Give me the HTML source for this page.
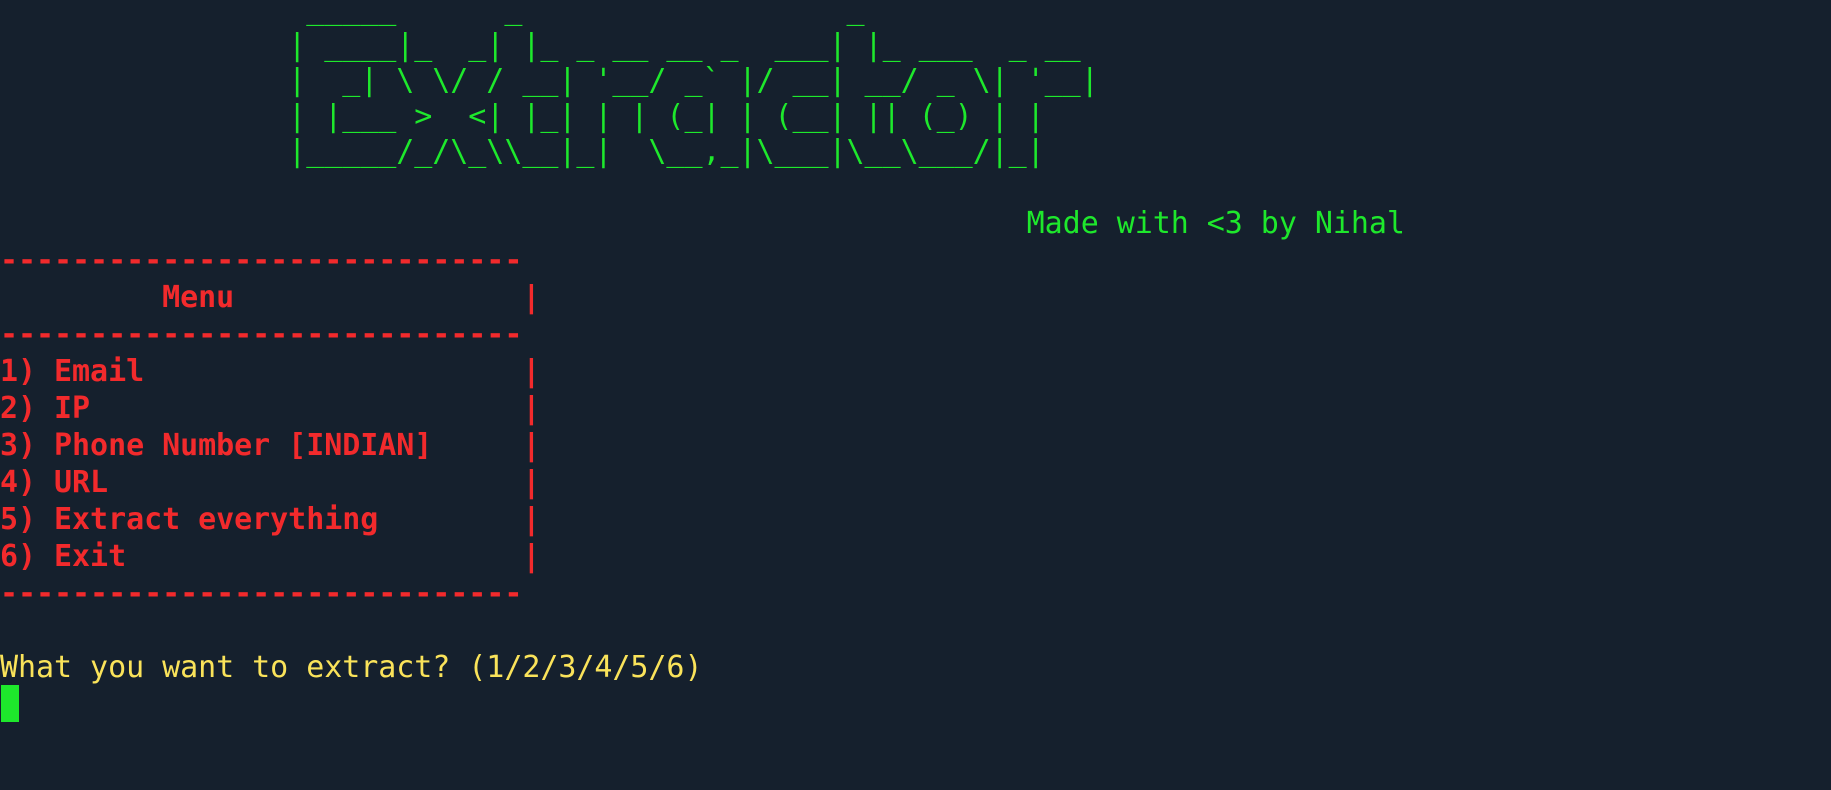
<!DOCTYPE html>
<html><head><meta charset="utf-8"><style>
html,body{margin:0;padding:0;background:#15202d;width:1831px;height:790px;overflow:hidden}
pre{position:absolute;left:0;margin:0;font-family:"DejaVu Sans Mono","Liberation Mono",monospace;font-size:30px;letter-spacing:-0.05px;white-space:pre}
.g{color:#1ee82c}.r{color:#f22a2c;font-weight:bold}.y{color:#fae35a}
#art{top:-8px;line-height:35.5px}
#made{top:206px;line-height:36px}
#menu{top:242px;line-height:37px}
#prompt{top:650px;line-height:36px}
#cur{position:absolute;left:1px;top:685px;width:18px;height:37px;background:#1ee82c}
</style></head><body>
<pre id="art" class="g">                 _____      _                  _             
                | ____|_  _| |_ _ __ __ _  ___| |_ ___  _ __ 
                |  _| \ \/ / __| '__/ _` |/ __| __/ _ \| '__|
                | |___ >  <| |_| | | (_| | (__| || (_) | |   
                |_____/_/\_\\__|_|  \__,_|\___|\__\___/|_|   </pre>
<pre id="made" class="g">                                                         Made with &lt;3 by Nihal</pre>
<pre id="menu" class="r">-----------------------------
         Menu                |
-----------------------------
1) Email                     |
2) IP                        |
3) Phone Number [INDIAN]     |
4) URL                       |
5) Extract everything        |
6) Exit                      |
-----------------------------</pre>
<pre id="prompt" class="y">What you want to extract? (1/2/3/4/5/6)</pre>
<div id="cur"></div>
</body></html>
